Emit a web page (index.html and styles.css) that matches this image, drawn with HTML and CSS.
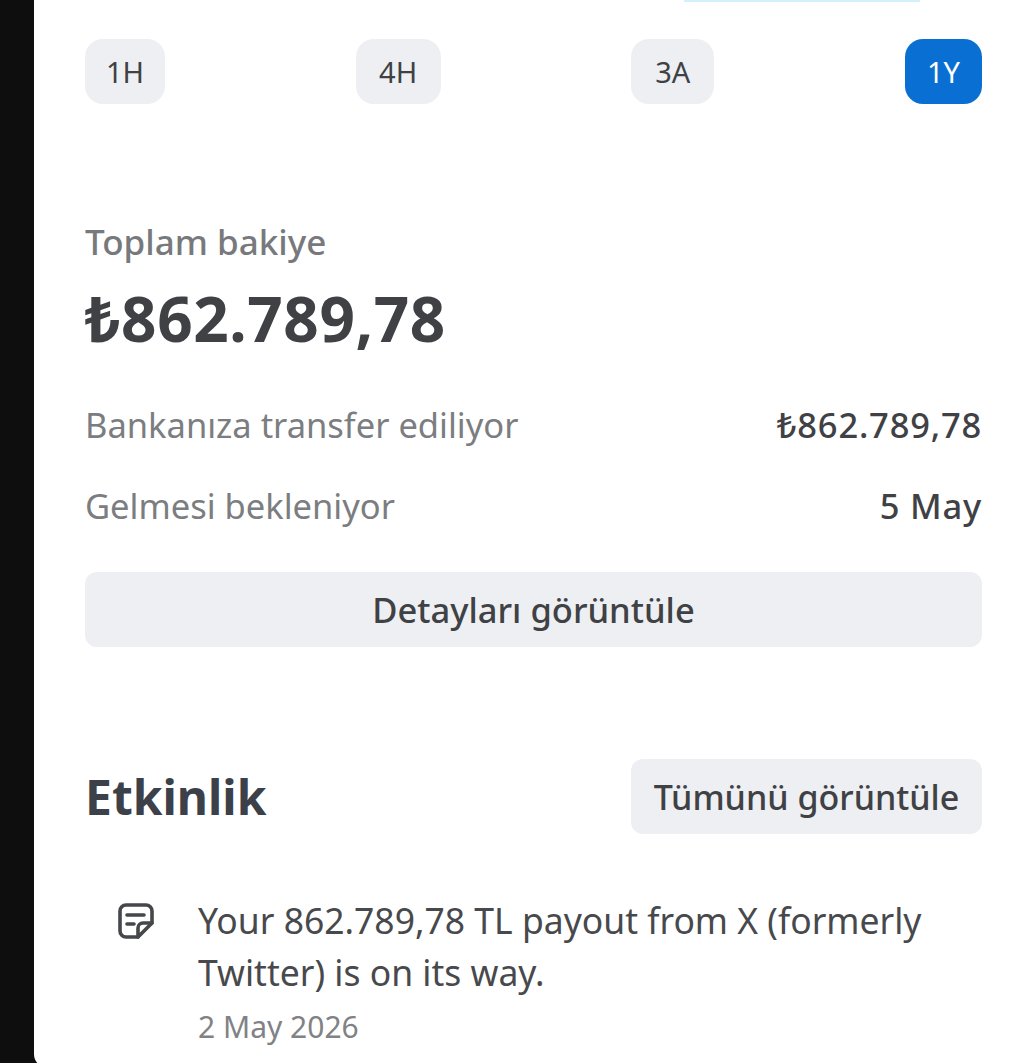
FILE: index.html
```html
<!DOCTYPE html>
<html lang="tr">
<head>
    <meta charset="UTF-8">
    <meta name="viewport" content="width=device-width, initial-scale=1.0">
    <title>Bakiye</title>
    <link rel="stylesheet" href="styles.css">
</head>
<body>
    <main class="screen">
        <div class="top-fade"></div>
        <div class="ranges">
            <button class="range range-1h">1H</button>
            <button class="range range-4h">4H</button>
            <button class="range range-3a">3A</button>
            <button class="range range-1y active">1Y</button>
        </div>

        <section class="balance">
            <p class="balance-label">Toplam bakiye</p>
            <p class="balance-amount">₺862.789,78</p>
            <div class="row">
                <span class="row-label">Bankanıza transfer ediliyor</span>
                <span class="row-value">₺862.789,78</span>
            </div>
            <div class="row">
                <span class="row-label">Gelmesi bekleniyor</span>
                <span class="row-value">5 May</span>
            </div>
            <button class="details-btn">Detayları görüntüle</button>
        </section>

        <section class="activity">
            <div class="activity-head">
                <h2>Etkinlik</h2>
                <button class="all-btn">Tümünü görüntüle</button>
            </div>
            <div class="activity-item">
                <svg class="note-icon" viewBox="0 0 36 36" fill="none" stroke="#45474b" stroke-width="3.6" stroke-linecap="round" stroke-linejoin="round">
                    <path d="M20 34H8a6 6 0 0 1-6-6V8a6 6 0 0 1 6-6h20a6 6 0 0 1 6 6v12L20 34z"/>
                    <path d="M20 34v-9a5 5 0 0 1 5-5h9"/>
                    <path d="M9 12h17M9 21h7"/>
                </svg>
                <div>
                    <p class="activity-text">Your 862.789,78 TL payout from X (formerly Twitter) is on its way.</p>
                    <p class="activity-date">2 May 2026</p>
                </div>
            </div>
        </section>
    </main>
</body>
</html>
```

FILE: styles.css
```css
* {
    margin: 0;
    padding: 0;
    box-sizing: border-box;
    font-family: "Noto Sans", "DejaVu Sans", sans-serif;
}
html, body {
    height: 100%;
    overflow: hidden;
    background-color: #0e0e0e;
}
button {
    border: none;
    cursor: pointer;
}
.screen {
    position: relative;
    margin-left: 34px;
    height: 1068px;
    padding: 39px 36px 0 51px;
    background-color: #fff;
    border-bottom-left-radius: 14px;
    overflow: hidden;
}
/* bit of the chart legend cut off by the top edge */
.top-fade {
    position: absolute;
    top: 0;
    left: 650px;
    width: 236px;
    height: 2px;
    background-color: #d4f1fb;
}
.ranges {
    display: flex;
    justify-content: space-between;
}
.range {
    height: 65px;
    border-radius: 18px;
    font-size: 29px;
    color: #3f4145;
    background-color: #edeff2;
}
.range-1h {
    width: 80px;
}
.range-4h {
    width: 85px;
}
.range-3a {
    width: 83px;
}
.range-1y {
    width: 77px;
}
.range.active {
    color: #fff;
    background-color: #0a6fd2;
}
.balance {
    margin-top: 113px;
}
.balance-label {
    font-size: 35px;
    line-height: 50px;
    font-weight: 500;
    color: #77797c;
}
.balance-amount {
    margin-top: 11px;
    font-size: 62px;
    line-height: 80px;
    font-weight: 700;
    letter-spacing: 0.6px;
    color: #3f4145;
}
.row {
    display: flex;
    justify-content: space-between;
    font-size: 34.5px;
    line-height: 50px;
    margin-top: 42px;
}
.row + .row {
    margin-top: 31px;
}
.row-label {
    color: #7b7d80;
}
.row-value {
    font-weight: 500;
    letter-spacing: 0.8px;
    color: #3f4145;
}
.details-btn {
    display: block;
    width: 100%;
    height: 75px;
    margin-top: 41px;
    border-radius: 12px;
    font-size: 34.5px;
    font-weight: 500;
    color: #3f4145;
    background-color: #edeff2;
}
.activity {
    margin-top: 112px;
}
.activity-head {
    display: flex;
    justify-content: space-between;
    align-items: center;
}
.activity-head h2 {
    font-size: 48px;
    font-weight: 700;
    color: #3c4048;
}
.all-btn {
    width: 351px;
    height: 75px;
    border-radius: 12px;
    font-size: 34px;
    font-weight: 500;
    color: #3f4145;
    background-color: #edeff2;
}
.activity-item {
    display: flex;
    align-items: flex-start;
    gap: 44px;
    margin-top: 60px;
    padding-left: 33px;
}
.note-icon {
    flex: none;
    width: 36px;
    height: 36px;
    margin-top: 9px;
}
.activity-text {
    font-size: 35.5px;
    line-height: 52px;
    color: #47494c;
    width: 760px;
}
.activity-date {
    margin-top: 9px;
    font-size: 30px;
    line-height: 40px;
    color: #808285;
}
```
